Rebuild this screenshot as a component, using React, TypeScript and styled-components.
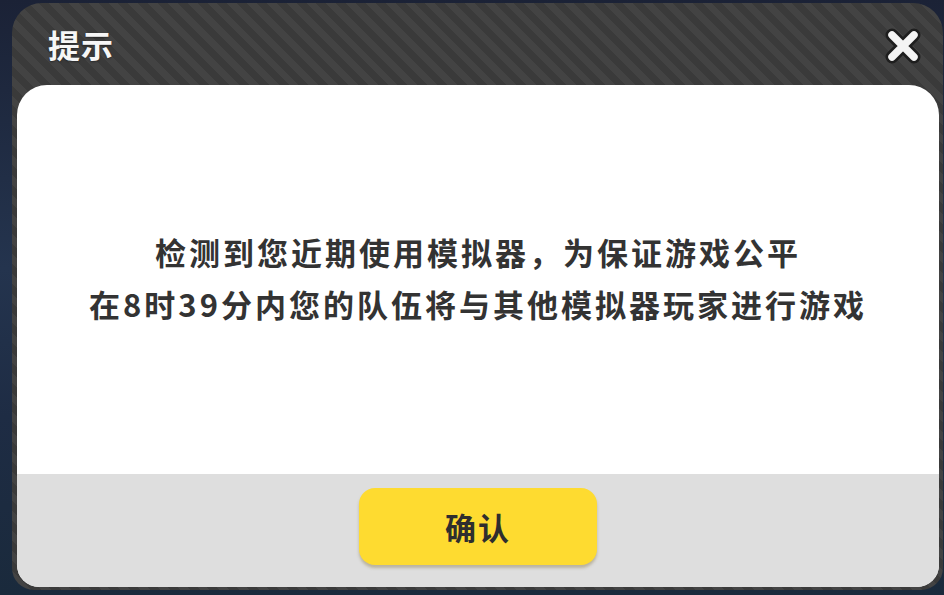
import React from "react";
import styled, { createGlobalStyle } from "styled-components";

const GlobalStyle = createGlobalStyle`
  html, body {
    margin: 0;
    padding: 0;
    width: 100%;
    height: 100%;
  }
  #root {
    height: 100%;
  }
  body {
    font-family: "Noto Sans CJK SC", "Noto Sans", sans-serif;
  }
`;

const notice = {
  title: "提示",
  lines: [
    "检测到您近期使用模拟器，为保证游戏公平",
    "在8时39分内您的队伍将与其他模拟器玩家进行游戏",
  ],
  confirm: "确认",
};

export default function App() {
  return (
    <>
      <GlobalStyle />
      <Page>
        <Dialog>
          <Header>
            <Title>{notice.title}</Title>
            <CloseButton aria-label="close">
              <svg width="38" height="38" viewBox="0 0 38 38">
                <g strokeLinecap="round">
                  <path d="M8 8 L30 30 M30 8 L8 30" stroke="#1e1e1e" strokeWidth="13" />
                  <path d="M8 8 L30 30 M30 8 L8 30" stroke="#f4f4f4" strokeWidth="7.5" />
                </g>
              </svg>
            </CloseButton>
          </Header>
          <Panel>
            <Message>
              {notice.lines.map((line) => (
                <Line key={line}>{line}</Line>
              ))}
            </Message>
            <Footer>
              <ConfirmButton>{notice.confirm}</ConfirmButton>
            </Footer>
          </Panel>
        </Dialog>
      </Page>
    </>
  );
}

const Page = styled.div`
  box-sizing: border-box;
  height: 100%;
  padding: 3px 1px 5px 12px;
  display: flex;
  background: linear-gradient(180deg, #1b2236 0%, #24344e 45%, #1e2c44 70%, #1a2a3c 100%);
`;

const Dialog = styled.div`
  flex: 1;
  display: flex;
  flex-direction: column;
  border-radius: 30px 30px 22px 22px;
  background-color: #3d3d3d;
  background-image: repeating-linear-gradient(
    45deg,
    #3a3a3a 0px,
    #3a3a3a 7px,
    #434343 7px,
    #434343 14px
  );
  overflow: hidden;
`;

const Header = styled.div`
  height: 82px;
  flex-shrink: 0;
  display: flex;
  align-items: center;
  justify-content: space-between;
  padding: 0 21px 0 36px;
`;

const Title = styled.div`
  color: #f6f6f6;
  font-size: 32px;
  font-weight: 700;
  letter-spacing: 1px;
  text-shadow: 0 1px 2px rgba(0, 0, 0, 0.4);
`;

const CloseButton = styled.div`
  width: 38px;
  height: 38px;
  margin-top: 4px;
  display: flex;
`;

const Panel = styled.div`
  flex: 1;
  margin: 0 4px 3px 5px;
  display: flex;
  flex-direction: column;
  border-radius: 30px 30px 22px 22px;
  overflow: hidden;
  background: #ffffff;
`;

const Message = styled.div`
  flex: 1;
  display: flex;
  flex-direction: column;
  align-items: center;
  justify-content: center;
  gap: 12px;
  padding-bottom: 4px;
`;

const Line = styled.div`
  color: #333333;
  font-size: 31px;
  line-height: 40px;
  font-weight: 700;
  letter-spacing: 3px;
`;

const Footer = styled.div`
  height: 113px;
  flex-shrink: 0;
  display: flex;
  justify-content: center;
  align-items: flex-start;
  padding-top: 14px;
  box-sizing: border-box;
  background: #dedede;
`;

const ConfirmButton = styled.div`
  width: 238px;
  height: 77px;
  display: flex;
  align-items: center;
  justify-content: center;
  border-radius: 16px;
  background: #fedb30;
  box-shadow: 0 3px 3px rgba(120, 100, 40, 0.35);
  color: #2e2e2e;
  font-size: 31px;
  font-weight: 700;
  letter-spacing: 2px;
`;
